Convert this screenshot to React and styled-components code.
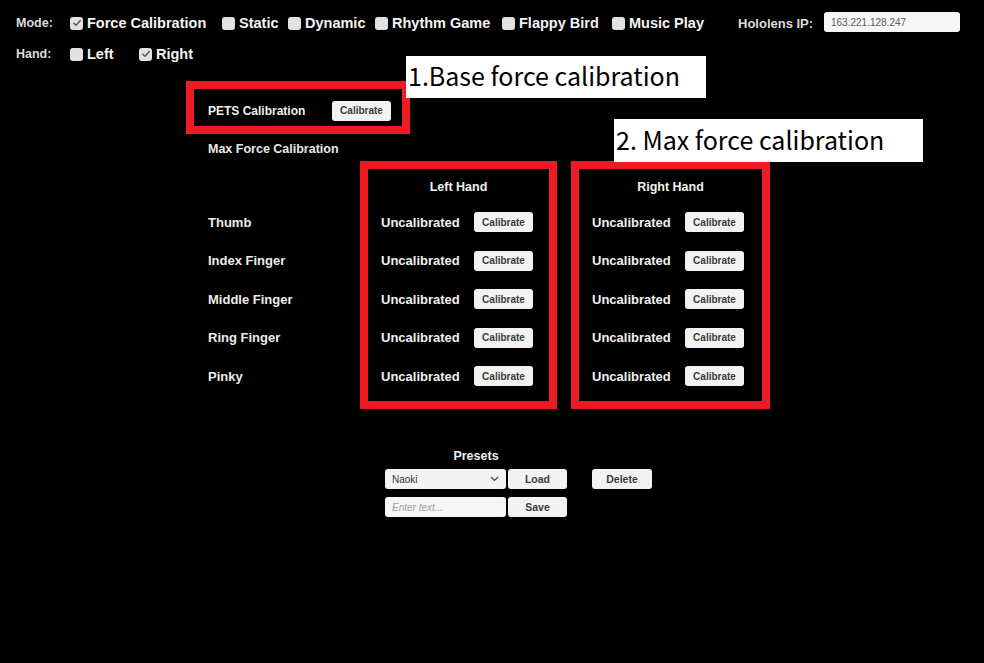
import React from "react";
import styled, { createGlobalStyle } from "styled-components";

const GlobalStyle = createGlobalStyle`
  html, body {
    margin: 0;
    padding: 0;
    background: #000;
  }
  #root {
    width: 984px;
    height: 663px;
    overflow: hidden;
  }
`;

const Page = styled.div`
  position: relative;
  width: 984px;
  height: 663px;
  background: #000;
  color: #f0f0f0;
  font-family: "Liberation Sans", Arial, sans-serif;
  font-weight: bold;
  overflow: hidden;
`;

const TopBar = styled.div`
  display: flex;
  flex-direction: column;
  gap: 9px;
  padding: 12px 0 0 16px;
`;

const BarRow = styled.div`
  display: flex;
  align-items: center;
  height: 22px;
`;

const FieldLabel = styled.span`
  flex: none;
  width: ${(p) => p.$w}px;
  font-size: ${(p) => p.$size || 12.5}px;
  color: #dcdcdc;
`;

const Toggle = styled.label`
  flex: none;
  display: flex;
  align-items: center;
  gap: 4px;
  width: ${(p) => p.$w}px;
  font-size: 14.5px;
  color: #f4f4f4;
  white-space: nowrap;
`;

const CheckBox = styled.span`
  flex: none;
  width: 13px;
  height: 13px;
  border-radius: 3px;
  background: #e2e2e2;
  display: flex;
  align-items: center;
  justify-content: center;
`;

const IpInput = styled.input`
  width: 136px;
  height: 20px;
  box-sizing: border-box;
  border: none;
  border-radius: 3px;
  background: #f6f6f6;
  padding: 0 7px;
  font-family: "Liberation Sans", Arial, sans-serif;
  font-size: 10px;
  color: #5a5a5a;
  outline: none;
  align-self: flex-start;
`;

const Main = styled.div`
  margin: 16px 0 0 186px;
  display: flex;
  flex-direction: column;
  align-items: flex-start;
`;

const RedFrame = styled.div`
  box-sizing: border-box;
  border: 8px solid #ed1c24;
`;

const PetsFrame = styled(RedFrame)`
  width: 224px;
  height: 53px;
  padding: 11px 0 0 14px;
`;

const PetsRow = styled.div`
  display: flex;
  align-items: center;
  height: 21px;
`;

const PetsLabel = styled.span`
  width: 124px;
  font-size: 12px;
  color: #f0f0f0;
`;

const SectionTitle = styled.div`
  margin: 7px 0 4px 22px;
  line-height: 16px;
  font-size: 12.5px;
  color: #e8e8e8;
`;

const FingerGrid = styled.div`
  display: grid;
  grid-template-columns: 138px 197px 199px;
  column-gap: 14px;
  padding-left: 22px;
`;

const LabelColumn = styled.div`
  display: flex;
  flex-direction: column;
  padding-top: 42px;
`;

const FingerLabel = styled.div`
  height: 38.5px;
  display: flex;
  align-items: center;
  font-size: 13px;
  color: #ececec;
`;

const HandFrame = styled(RedFrame)`
  height: 248px;
  display: flex;
  flex-direction: column;
`;

const HandHeader = styled.div`
  height: 34px;
  box-sizing: border-box;
  padding-top: 2px;
  display: flex;
  align-items: center;
  justify-content: center;
  font-size: 12.5px;
  color: #f0f0f0;
`;

const HandRow = styled.div`
  height: 38.5px;
  display: flex;
  align-items: center;
  padding-left: 13px;
`;

const Status = styled.span`
  width: 93px;
  font-size: 13px;
  color: #f0f0f0;
`;

const UiButton = styled.button`
  flex: none;
  width: ${(p) => p.$w || 59}px;
  height: 20px;
  padding: 0;
  border: none;
  border-radius: 3px;
  background: #f2f2f2;
  color: #3c3c3c;
  font-family: "Liberation Sans", Arial, sans-serif;
  font-weight: bold;
  font-size: ${(p) => p.$size || 10}px;
  cursor: pointer;
  justify-self: ${(p) => p.$justify || "stretch"};
`;

const PresetsSection = styled.div`
  margin: 39px 0 0 199px;
  display: flex;
  flex-direction: column;
`;

const PresetsTitle = styled.div`
  width: 182px;
  text-align: center;
  line-height: 16px;
  font-size: 12.5px;
  color: #f0f0f0;
  margin-bottom: 5px;
`;

const PresetsGrid = styled.div`
  display: grid;
  grid-template-columns: 121px 59px 83px;
  column-gap: 2px;
  row-gap: 8px;
`;

const Dropdown = styled.div`
  height: 20px;
  box-sizing: border-box;
  border-radius: 3px;
  background: #f3f3f3;
  padding: 0 7px;
  display: flex;
  align-items: center;
  justify-content: space-between;
  font-size: 10px;
  font-weight: normal;
  color: #333;
`;

const TextField = styled.input`
  height: 20px;
  width: 121px;
  box-sizing: border-box;
  border: none;
  border-radius: 3px;
  background: #f6f6f6;
  padding: 0 7px;
  font-family: "Liberation Sans", Arial, sans-serif;
  font-size: 10px;
  outline: none;
  &::placeholder {
    color: #a0a0a0;
    font-style: italic;
  }
`;

const Callout = styled.div`
  position: absolute;
  left: ${(p) => p.$x}px;
  top: ${(p) => p.$y}px;
  width: ${(p) => p.$w}px;
  height: ${(p) => p.$h}px;
  box-sizing: border-box;
  background: #fff;
  color: #000;
  font-family: "Noto Sans CJK JP", "Noto Sans", sans-serif;
  font-weight: normal;
  font-size: 25px;
  line-height: 1;
  display: flex;
  align-items: center;
  padding: 0 0 3px 2px;
  white-space: nowrap;
  z-index: 2;
`;

const Check = () => (
  <svg width="10" height="10" viewBox="0 0 10 10">
    <path d="M1.8 5.2 L4 7.3 L8.3 2.6" fill="none" stroke="#5a5a5a" strokeWidth="1.5" strokeLinecap="round" strokeLinejoin="round" />
  </svg>
);

const ToggleItem = ({ w, checked, children }) => (
  <Toggle $w={w}>
    <CheckBox>{checked && <Check />}</CheckBox>
    {children}
  </Toggle>
);

const fingers = ["Thumb", "Index Finger", "Middle Finger", "Ring Finger", "Pinky"];

const HandPanel = ({ title }) => (
  <HandFrame>
    <HandHeader>{title}</HandHeader>
    {fingers.map((f) => (
      <HandRow key={f}>
        <Status>Uncalibrated</Status>
        <UiButton>Calibrate</UiButton>
      </HandRow>
    ))}
  </HandFrame>
);

export default function App() {
  return (
    <Page>
      <GlobalStyle />
      <TopBar>
        <BarRow>
          <FieldLabel $w={54}>Mode:</FieldLabel>
          <ToggleItem w={152} checked>Force Calibration</ToggleItem>
          <ToggleItem w={66}>Static</ToggleItem>
          <ToggleItem w={87}>Dynamic</ToggleItem>
          <ToggleItem w={127}>Rhythm Game</ToggleItem>
          <ToggleItem w={110}>Flappy Bird</ToggleItem>
          <ToggleItem w={126}>Music Play</ToggleItem>
          <FieldLabel $w={86} $size={13}>Hololens IP:</FieldLabel>
          <IpInput defaultValue="163.221.128.247" readOnly />
        </BarRow>
        <BarRow>
          <FieldLabel $w={54}>Hand:</FieldLabel>
          <ToggleItem w={69}>Left</ToggleItem>
          <ToggleItem w={69} checked>Right</ToggleItem>
        </BarRow>
      </TopBar>

      <Main>
        <PetsFrame>
          <PetsRow>
            <PetsLabel>PETS Calibration</PetsLabel>
            <UiButton>Calibrate</UiButton>
          </PetsRow>
        </PetsFrame>
        <SectionTitle>Max Force Calibration</SectionTitle>
        <FingerGrid>
          <LabelColumn>
            {fingers.map((f) => (
              <FingerLabel key={f}>{f}</FingerLabel>
            ))}
          </LabelColumn>
          <HandPanel title="Left Hand" />
          <HandPanel title="Right Hand" />
        </FingerGrid>

        <PresetsSection>
          <PresetsTitle>Presets</PresetsTitle>
          <PresetsGrid>
            <Dropdown>
              <span>Naoki</span>
              <svg width="9" height="6" viewBox="0 0 9 6">
                <path d="M1 1 L4.5 4.5 L8 1" fill="none" stroke="#444" strokeWidth="1.2" />
              </svg>
            </Dropdown>
            <UiButton $size={10.5}>Load</UiButton>
            <UiButton $w={60} $size={10.5} $justify="end">Delete</UiButton>
            <TextField placeholder="Enter text..." />
            <UiButton $size={10.5}>Save</UiButton>
          </PresetsGrid>
        </PresetsSection>
      </Main>

      <Callout $x={406} $y={56} $w={300} $h={42}>1.Base force calibration</Callout>
      <Callout $x={614} $y={119} $w={309} $h={43}>2. Max force calibration</Callout>
    </Page>
  );
}
